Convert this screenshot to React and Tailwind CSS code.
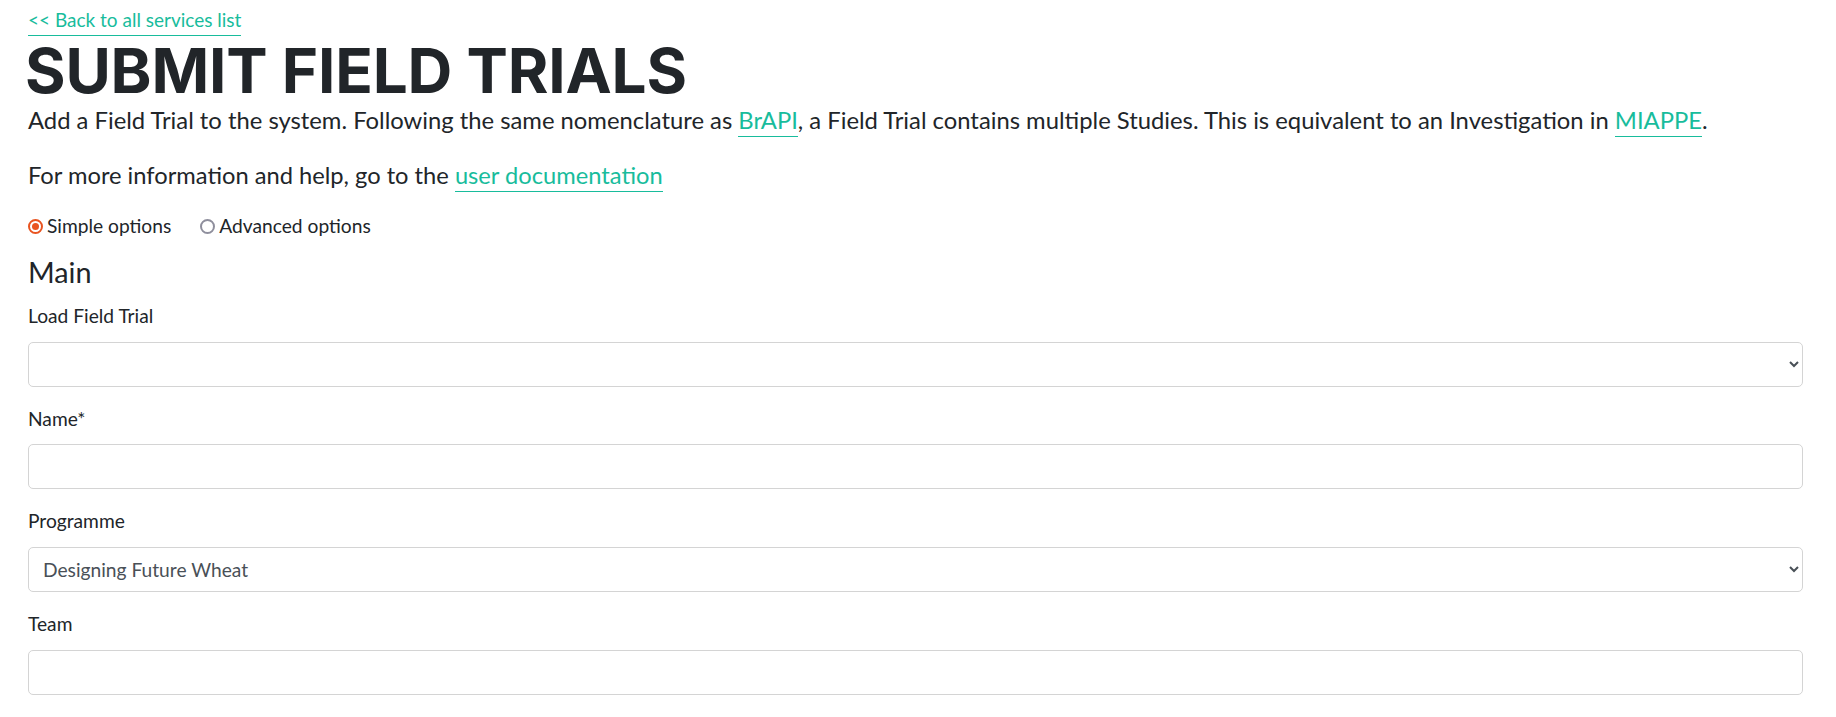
import { useState } from "react";

const linkCls = "text-[#18bc9c] border-b border-[#18bc9c] pb-[2px] hover:text-[#128f76]";

const Field = ({ label, children }) => (
  <div className="mb-[18px]">
    <label className="block text-[19.2px] leading-[28.8px] mb-[11px]">{label}</label>
    {children}
  </div>
);

const boxCls =
  "block w-full h-[45px] bg-white border border-[#d4d4d4] rounded-[5px] text-[19.2px] text-[#495057] font-['Lato',sans-serif] outline-none";

const Radio = ({ checked, label, onClick }) => (
  <label className="flex items-center cursor-pointer" onClick={onClick}>
    {checked ? (
      <span className="w-[15px] h-[15px] rounded-full border-2 border-[#e95420] flex items-center justify-center">
        <span className="w-[7px] h-[7px] rounded-full bg-[#e95420]"></span>
      </span>
    ) : (
      <span className="w-[15px] h-[15px] rounded-full border-2 border-[#8f8f9d]"></span>
    )}
    <span className="ml-[4px]">{label}</span>
  </label>
);

const App = () => {
  const [mode, setMode] = useState("simple");
  const [form, setForm] = useState({ trial: "", name: "", programme: "dfw", team: "" });

  const handleChange = (e) => {
    setForm((prev) => ({ ...prev, [e.target.name]: e.target.value }));
  };

  return (
    <div className="min-h-screen bg-white pl-[28px] pr-[33px] pt-[6px] font-['Lato',sans-serif] text-[#212529]">
      <a href="#" className="inline-block text-[19px] leading-[28.8px] text-[#18bc9c] border-b border-[#18bc9c]">
        &lt;&lt; Back to all services list
      </a>

      <h1 className="mt-[3px] font-['Inter',sans-serif] font-bold text-[62px] leading-[63px] -ml-[3px] tracking-[-0.2px] text-[#212529]">
        SUBMIT FIELD TRIALS
      </h1>

      <p className="text-[23.8px] leading-[36px]">
        Add a Field Trial to the system. Following the same nomenclature as{" "}
        <a href="#" className={linkCls}>BrAPI</a>, a Field Trial contains multiple Studies. This is equivalent to an
        Investigation in <a href="#" className={linkCls}>MIAPPE</a>.
      </p>

      <p className="mt-[19.2px] text-[23.7px] leading-[36px]">
        For more information and help, go to the <a href="#" className={linkCls}>user documentation</a>
      </p>

      {/* Simple / advanced toggle */}
      <div className="mt-[19px] flex items-center gap-[29px] text-[19.2px] leading-[28.8px]">
        <Radio checked={mode === "simple"} label="Simple options" onClick={() => setMode("simple")} />
        <Radio checked={mode === "advanced"} label="Advanced options" onClick={() => setMode("advanced")} />
      </div>

      <h4 className="mt-[14px] mb-[12.4px] text-[28.8px] leading-[34.56px]">Main</h4>

      <Field label="Load Field Trial">
        <select name="trial" value={form.trial} onChange={handleChange} className={`${boxCls} px-[10px]`}>
          <option value=""></option>
        </select>
      </Field>

      <Field label="Name*">
        <input type="text" name="name" value={form.name} onChange={handleChange} className={`${boxCls} px-[14px]`} />
      </Field>

      <Field label="Programme">
        <select name="programme" value={form.programme} onChange={handleChange} className={`${boxCls} px-[10px]`}>
          <option value="dfw">Designing Future Wheat</option>
        </select>
      </Field>

      <Field label="Team">
        <input type="text" name="team" value={form.team} onChange={handleChange} className={`${boxCls} px-[14px]`} />
      </Field>
    </div>
  );
};

export default App;
